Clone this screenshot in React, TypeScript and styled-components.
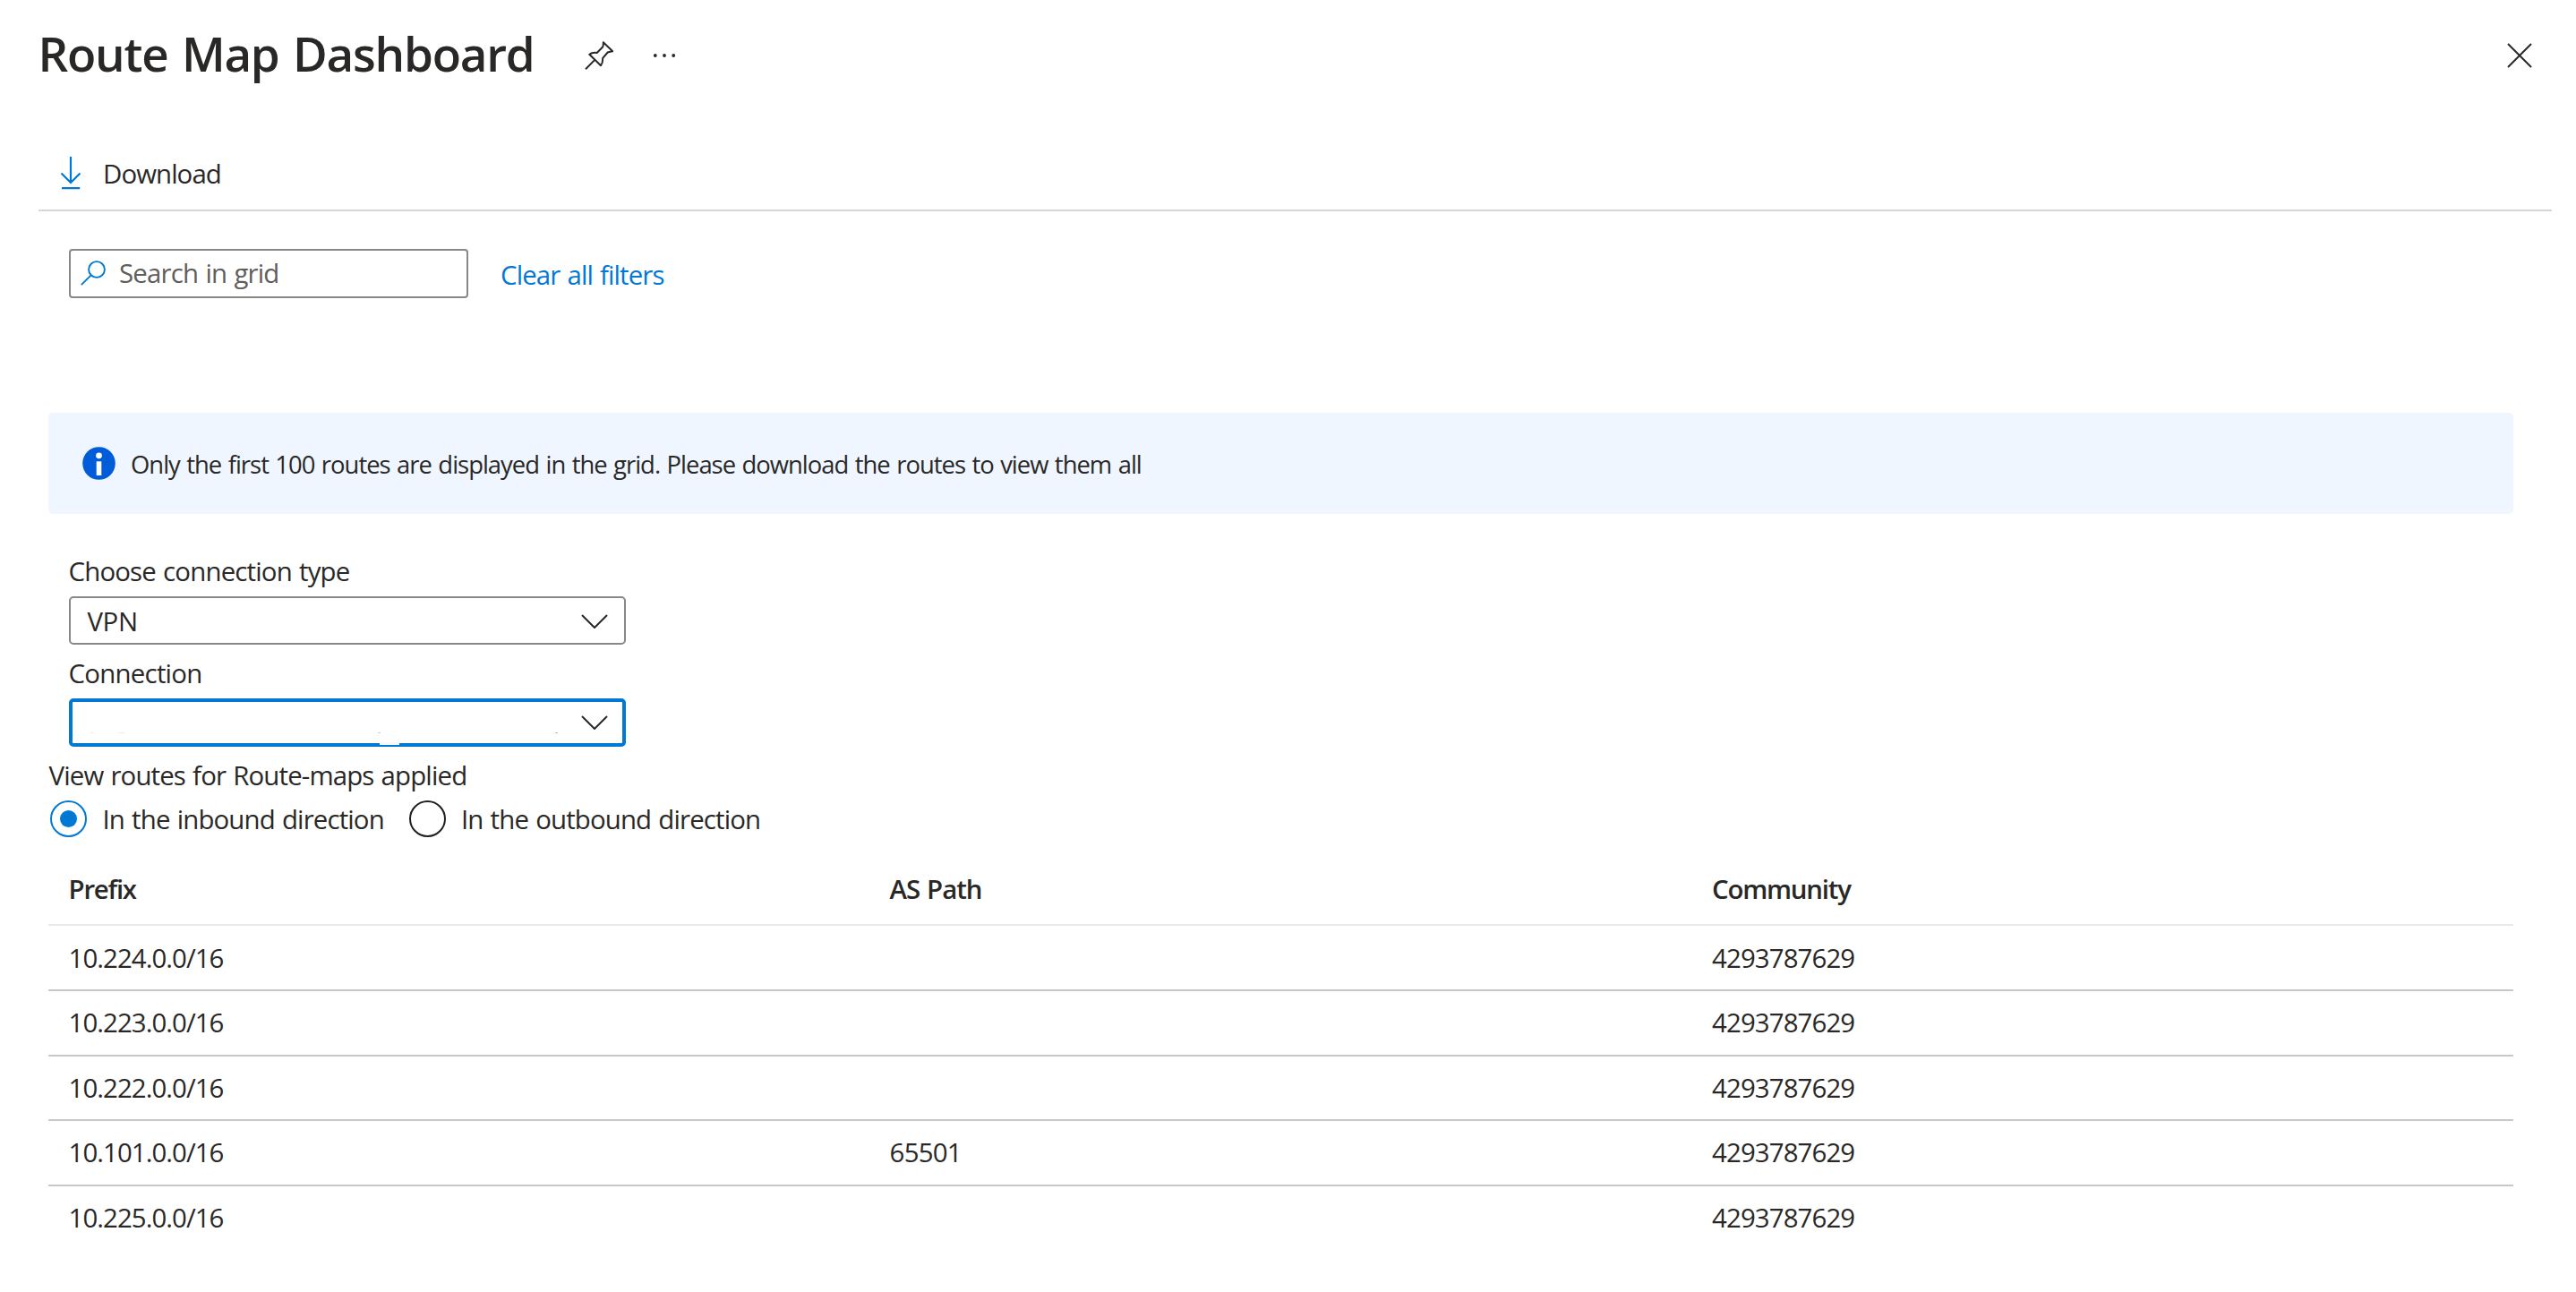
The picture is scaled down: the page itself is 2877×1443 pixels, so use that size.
import React, { useState } from "react";
import styled, { createGlobalStyle } from "styled-components";

const color = {
  text: "#292827",
  muted: "#605e5c",
  blue: "#0078d4",
  info: "#015cda",
  border: "#8a8886",
};

const GlobalStyle = createGlobalStyle`
  *, *::before, *::after { box-sizing: border-box; }
  body {
    margin: 0;
    background: #fff;
    color: ${color.text};
    font-family: "Open Sans", "Noto Sans", sans-serif;
    font-size: 29.4px;
    line-height: 40px;
    word-spacing: 1.3px;
  }
`;

const Page = styled.main`
  display: flex;
  flex-direction: column;
  min-height: 1443px;
`;

const Label = styled.span<{ $track?: number }>`
  letter-spacing: ${(p) => p.$track ?? 0}px;
  white-space: nowrap;
`;

const Header = styled.header`
  display: flex;
  align-items: center;
  height: 96px;
  padding: 22px 49.5px 0 42.5px;
`;

const Title = styled.h1`
  margin: 0;
  width: 610px;
  font-size: 52.9px;
  font-weight: 600;
  line-height: 72px;
  letter-spacing: -1.23px;
  word-spacing: 3px;
  white-space: nowrap;
`;

const IconButton = styled.button<{ $gap?: number; $push?: boolean }>`
  display: flex;
  padding: 0;
  border: 0;
  background: none;
  color: ${color.text};
  margin: 5px 0 0 ${(p) => (p.$push ? "auto" : `${p.$gap ?? 0}px`)};
`;

const Toolbar = styled.nav`
  display: flex;
  height: 140px;
  margin: 0 27px 0 43px;
  padding: 78px 0 0 24px;
  border-bottom: 2px solid #d6d6d6;
`;

const ToolbarButton = styled.button`
  display: flex;
  gap: 24px;
  height: 40px;
  padding: 0;
  border: 0;
  background: none;
  color: inherit;
  font: inherit;
  line-height: 40px;
`;

const FilterBar = styled.section`
  display: flex;
  align-items: center;
  gap: 36px;
  padding: 42px 0 0 77px;
`;

const SearchBox = styled.div`
  display: flex;
  align-items: center;
  gap: 13px;
  width: 446px;
  height: 55px;
  padding: 0 0 1px 11px;
  border: 2px solid ${color.border};
  border-radius: 4px;
  color: ${color.muted};
`;

const ClearLink = styled.a`
  margin-top: 2px;
  color: ${color.blue};
  letter-spacing: -0.88px;
  white-space: nowrap;
`;

const Banner = styled.section`
  display: flex;
  align-items: center;
  gap: 17px;
  height: 113px;
  margin: 128px 70px 0 54px;
  padding-left: 38px;
  border-radius: 5px;
  background: #eff6ff;
  font-size: 27.4px;
`;

const BannerText = styled.p`
  margin: 2px 0 0;
  letter-spacing: -0.98px;
  white-space: nowrap;
`;

const Form = styled.section`
  display: flex;
  flex-direction: column;
  gap: 12px;
  padding: 44px 0 0 76.5px;
`;

const Field = styled.div`
  display: flex;
  flex-direction: column;
  gap: 8px;
`;

const Select = styled.div<{ $focused?: boolean }>`
  position: relative;
  display: flex;
  align-items: center;
  justify-content: space-between;
  width: 622px;
  height: 54px;
  padding: ${(p) => (p.$focused ? "0 16px 0 18px" : "2px 18px 0 19px")};
  border: ${(p) => (p.$focused ? `4px solid ${color.blue}` : `2px solid ${color.border}`)};
  border-radius: 5px;
`;

const Notch = styled.i`
  position: absolute;
  left: 343px;
  bottom: -2px;
  width: 22px;
  height: 3px;
  background: #f4f9fd;
`;

const Speck = styled.i<{ $x: number; $w: number; $tone: string }>`
  position: absolute;
  left: ${(p) => p.$x}px;
  bottom: 11px;
  width: ${(p) => p.$w}px;
  height: 1px;
  background: ${(p) => p.$tone};
`;

const Directions = styled.fieldset`
  display: flex;
  flex-direction: column;
  gap: 8px;
  margin: 12px 0 0;
  padding: 0 0 0 54.5px;
  border: 0;
`;

const RadioRow = styled.div`
  display: flex;
  padding-left: 1.5px;
`;

const RadioOption = styled.div<{ $width: number }>`
  display: flex;
  align-items: center;
  gap: 17.5px;
  width: ${(p) => p.$width}px;
  height: 41px;
`;

const RadioCircle = styled.span<{ $on: boolean }>`
  display: grid;
  place-items: center;
  flex: none;
  width: 41px;
  height: 41px;
  border: 2px solid ${(p) => (p.$on ? color.blue : "#201f1e")};
  border-radius: 50%;

  &::after {
    content: "";
    width: 19px;
    height: 19px;
    border-radius: 50%;
    background: ${(p) => (p.$on ? color.blue : "transparent")};
  }
`;

const Grid = styled.section`
  display: flex;
  flex-direction: column;
  margin: 19px 70px 0 54px;
`;

const Row = styled.div<{ $head?: boolean; $last?: boolean }>`
  display: grid;
  grid-template-columns: 917px 918.5px 1fr;
  align-items: center;
  height: ${(p) => (p.$head ? 80.4 : 72.6)}px;
  border-bottom: 2px solid ${(p) => (p.$head ? "#ebe9e8" : p.$last ? "transparent" : "#c8c8c8")};
  font-weight: ${(p) => (p.$head ? 600 : 400)};
`;

const Cell = styled.div<{ $track: number }>`
  padding-left: 22.6px;
  letter-spacing: ${(p) => p.$track}px;
`;

const PinIcon = () => (
  <svg width="32" height="32" viewBox="0 0 32 32" fill="none" stroke="currentColor" strokeWidth="2" strokeLinejoin="round">
    <path d="M1 31.3 11.3 20.9" />
    <path d="M5.3 14.7C7.5 13 10.5 12.6 13.7 13L20.3 6.3C20.8 4.5 20.9 3 20.8 1.2L31.2 11.2C29 11.4 27.4 11.9 25.7 12.5L20.2 18.8C20.3 22 19.6 25 18 27.3Z" />
  </svg>
);

const MoreIcon = () => (
  <svg width="26" height="6" viewBox="0 0 26 6" fill="currentColor">
    <circle cx="2.8" cy="3" r="1.9" />
    <circle cx="13" cy="3" r="1.9" />
    <circle cx="23.2" cy="3" r="1.9" />
  </svg>
);

const CloseIcon = () => (
  <svg width="28" height="28" viewBox="0 0 28 28" fill="none" stroke="currentColor" strokeWidth="2">
    <path d="M1 1 27 27M27 1 1 27" />
  </svg>
);

const DownloadIcon = () => (
  <svg width="24" height="38" viewBox="0 0 24 38" fill="none" stroke={color.blue} strokeWidth="2.2">
    <path d="M12 1V30.5M1.5 19.5 12 30 22.5 19.5M2 36.2H22.2" />
  </svg>
);

const SearchIcon = () => (
  <svg width="30" height="28" viewBox="0 0 30 28" fill="none" stroke={color.blue} strokeWidth="1.9">
    <circle cx="18" cy="10" r="8.9" />
    <path d="M11.7 16.3 .8 27.2" />
  </svg>
);

const ChevronIcon = () => (
  <svg width="30" height="16" viewBox="0 0 30 16" fill="none" stroke={color.text} strokeWidth="2">
    <path d="M1 1 15 15 29 1" />
  </svg>
);

const InfoIcon = () => (
  <svg width="37" height="37" viewBox="0 0 37 37">
    <circle cx="18.5" cy="18.5" r="18.3" fill={color.info} />
    <circle cx="18.5" cy="9.8" r="3.4" fill="#fff" />
    <rect x="15.7" y="16.3" width="5.6" height="15.7" fill="#fff" />
  </svg>
);

const routes = [
  { prefix: "10.224.0.0/16", asPath: "", community: "4293787629" },
  { prefix: "10.223.0.0/16", asPath: "", community: "4293787629" },
  { prefix: "10.222.0.0/16", asPath: "", community: "4293787629" },
  { prefix: "10.101.0.0/16", asPath: "65501", community: "4293787629" },
  { prefix: "10.225.0.0/16", asPath: "", community: "4293787629" },
];

export default function App() {
  const [direction, setDirection] = useState<"in" | "out">("in");

  return (
    <Page>
      <GlobalStyle />
      <Header>
        <Title>Route Map Dashboard</Title>
        <IconButton aria-label="Pin"><PinIcon /></IconButton>
        <IconButton aria-label="More" $gap={44}><MoreIcon /></IconButton>
        <IconButton aria-label="Close" $push><CloseIcon /></IconButton>
      </Header>

      <Toolbar>
        <ToolbarButton>
          <DownloadIcon />
          <Label $track={-0.92}>Download</Label>
        </ToolbarButton>
      </Toolbar>

      <FilterBar>
        <SearchBox>
          <SearchIcon />
          <Label $track={-0.8}>Search in grid</Label>
        </SearchBox>
        <ClearLink>Clear all filters</ClearLink>
      </FilterBar>

      <Banner>
        <InfoIcon />
        <BannerText>
          Only the first 100 routes are displayed in the grid. Please download the routes to view them all
        </BannerText>
      </Banner>

      <Form>
        <Field>
          <Label $track={-0.82}>Choose connection type</Label>
          <Select>
            <Label $track={-0.4}>VPN</Label>
            <ChevronIcon />
          </Select>
        </Field>
        <Field>
          <Label $track={-0.74}>Connection</Label>
          <Select $focused>
            <Label />
            <ChevronIcon />
            <Speck $x={20} $w={4} $tone="#ededed" />
            <Speck $x={51} $w={7} $tone="#ebebeb" />
            <Speck $x={341} $w={3} $tone="#cfcfcf" />
            <Speck $x={539} $w={3} $tone="#bdbdbd" />
            <Notch />
          </Select>
        </Field>
      </Form>

      <Directions>
        <Label $track={-0.85}>View routes for Route-maps applied</Label>
        <RadioRow>
          <RadioOption $width={400.5} onClick={() => setDirection("in")}>
            <RadioCircle $on={direction === "in"} />
            <Label $track={-0.85}>In the inbound direction</Label>
          </RadioOption>
          <RadioOption $width={400} onClick={() => setDirection("out")}>
            <RadioCircle $on={direction === "out"} />
            <Label $track={-0.85}>In the outbound direction</Label>
          </RadioOption>
        </RadioRow>
      </Directions>

      <Grid>
        <Row $head>
          <Cell $track={-1.25}>Prefix</Cell>
          <Cell $track={-1.0}>AS Path</Cell>
          <Cell $track={-1.22}>Community</Cell>
        </Row>
        {routes.map((route, i) => (
          <Row key={route.prefix} $last={i === routes.length - 1}>
            <Cell $track={-0.95}>{route.prefix}</Cell>
            <Cell $track={-0.75}>{route.asPath}</Cell>
            <Cell $track={-0.89}>{route.community}</Cell>
          </Row>
        ))}
      </Grid>
    </Page>
  );
}
